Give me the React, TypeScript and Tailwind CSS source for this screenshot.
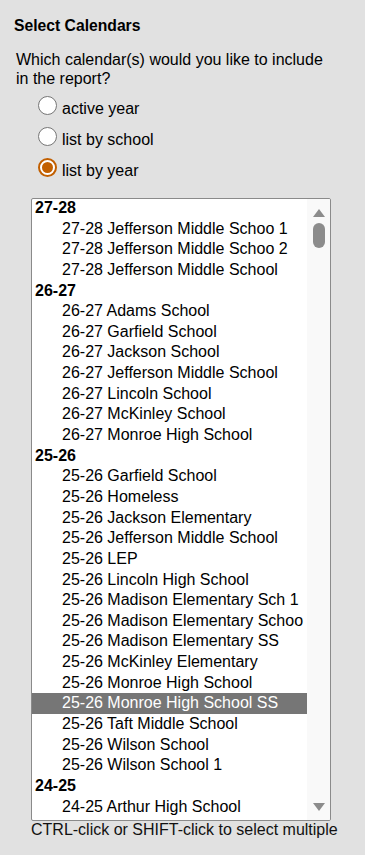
import React, { useState } from 'react';

type Row = { label: string; group?: boolean };

const rows: Row[] = [
  { label: '27-28', group: true },
  { label: '27-28 Jefferson Middle Schoo 1' },
  { label: '27-28 Jefferson Middle Schoo 2' },
  { label: '27-28 Jefferson Middle School' },
  { label: '26-27', group: true },
  { label: '26-27 Adams School' },
  { label: '26-27 Garfield School' },
  { label: '26-27 Jackson School' },
  { label: '26-27 Jefferson Middle School' },
  { label: '26-27 Lincoln School' },
  { label: '26-27 McKinley School' },
  { label: '26-27 Monroe High School' },
  { label: '25-26', group: true },
  { label: '25-26 Garfield School' },
  { label: '25-26 Homeless' },
  { label: '25-26 Jackson Elementary' },
  { label: '25-26 Jefferson Middle School' },
  { label: '25-26 LEP' },
  { label: '25-26 Lincoln High School' },
  { label: '25-26 Madison Elementary Sch 1' },
  { label: '25-26 Madison Elementary Schoo' },
  { label: '25-26 Madison Elementary SS' },
  { label: '25-26 McKinley Elementary' },
  { label: '25-26 Monroe High School' },
  { label: '25-26 Monroe High School SS' },
  { label: '25-26 Taft Middle School' },
  { label: '25-26 Wilson School' },
  { label: '25-26 Wilson School 1' },
  { label: '24-25', group: true },
  { label: '24-25 Arthur High School' },
];

const options = ['active year', 'list by school', 'list by year'];

const Radio = ({ checked }: { checked: boolean }) =>
  checked ? (
    <span className="w-[19px] h-[19px] rounded-full border-2 border-[#c25f00] bg-white flex items-center justify-center shrink-0">
      <span className="w-[11px] h-[11px] rounded-full bg-[#c25f00]" />
    </span>
  ) : (
    <span className="w-[19px] h-[19px] rounded-full border border-[#767676] bg-white shrink-0" />
  );

export default function App() {
  const [mode, setMode] = useState(2);
  const [selected, setSelected] = useState(24);

  return (
    <div
      className="w-full h-[855px] bg-[#e1e1e1] text-black overflow-hidden"
      style={{ fontFamily: '"Liberation Sans", Arial, sans-serif' }}
    >
      <div className="pl-[14px] pt-[17px] text-[15.7px] font-bold leading-[18px]">Select Calendars</div>

      <div className="ml-[16px] mt-[15px] w-[322px] text-[16px] leading-[19px]">
        Which calendar(s) would you like to include in the report?
      </div>

      {/* radio options */}
      <div className="pl-[38px] pt-[8px] flex flex-col gap-[12px]">
        {options.map((o, i) => (
          <label key={o} className="flex items-center gap-[5px] h-[19px] cursor-pointer" onClick={() => setMode(i)}>
            <Radio checked={mode === i} />
            <span className="text-[16px] leading-[19px] mt-[5px]">{o}</span>
          </label>
        ))}
      </div>

      {/* list box */}
      <div className="ml-[31px] mt-[21px] w-[300px] h-[623px] bg-white border border-[#8a8a8a] rounded-[2px] flex overflow-hidden">
        <div className="flex-1 flex flex-col -mt-[1px]">
          {rows.map((r, i) =>
            r.group ? (
              <div key={i} className="h-[20.65px] leading-[20.65px] pl-[3px] text-[16px] font-bold">
                {r.label}
              </div>
            ) : (
              <div
                key={i}
                onClick={() => setSelected(i)}
                className={`h-[20.65px] leading-[20.65px] pl-[30px] text-[16px] whitespace-nowrap ${
                  selected === i ? 'bg-[#767676] text-white' : ''
                }`}
              >
                {r.label}
              </div>
            )
          )}
        </div>
        <div className="w-[23px] bg-[#f9f9f9] flex flex-col items-center pt-[10px] pb-[9px]">
          <svg width="12" height="8" viewBox="0 0 12 8">
            <path d="M6 0 L12 8 L0 8 Z" fill="#8c8c8c" />
          </svg>
          <div className="mt-[6px] w-[12px] h-[25px] rounded-full bg-[#8c8c8c]" />
          <div className="flex-1" />
          <svg width="12" height="8" viewBox="0 0 12 8">
            <path d="M0 0 L12 0 L6 8 Z" fill="#8c8c8c" />
          </svg>
        </div>
      </div>

      <div className="pl-[31px] text-[16px] leading-[18px] text-[#111]">
        CTRL-click or SHIFT-click to select multiple
      </div>
    </div>
  );
}
